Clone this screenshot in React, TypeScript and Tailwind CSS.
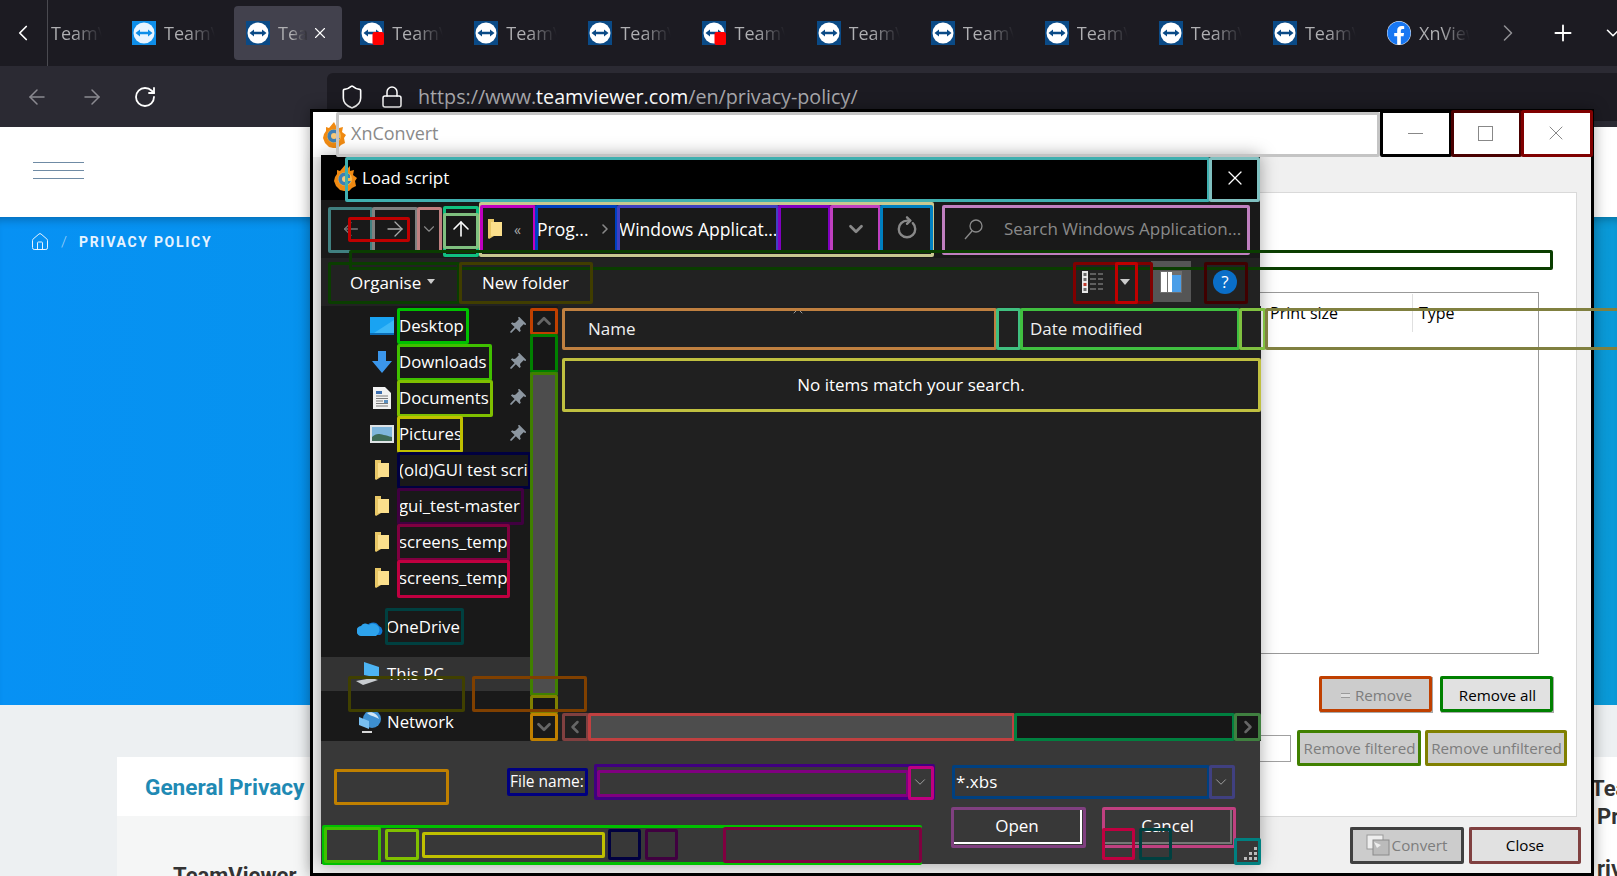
import React from "react";
import {
  ArrowLeft,
  ArrowRight,
  ArrowUp,
  ChevronDown,
  ChevronLeft,
  ChevronRight,
  ChevronUp,
  Home,
  Lock,
  Plus,
  RotateCw,
  Shield,
  X,
} from "lucide-react";
import { FaFacebook } from "react-icons/fa";
import { MdPushPin } from "react-icons/md";

const TvIcon = ({ light, badge }: { light?: boolean; badge?: boolean }) => (
  <svg width="24" height="24" viewBox="0 0 24 24" className="shrink-0">
    <rect width="24" height="24" fill={light ? "#0e8ee9" : "#0a4a86"} />
    <circle cx="12" cy="12" r="10.5" fill={light ? "#e8f4ff" : "#fff"} />
    <path
      d="M3.5 12l4.5-3.5v2.2h8V8.5l4.5 3.5-4.5 3.5v-2.2H8v2.2z"
      fill={light ? "#0e8ee9" : "#0a4a86"}
    />
    {badge && <rect x="12.5" y="11" width="11.5" height="13" rx="2" fill="#f00" />}
  </svg>
);

const XnLogo = () => (
  <svg width="24" height="26" viewBox="0 0 24 26" className="shrink-0">
    <path
      d="M12 0l2 4 3-3 0 5 4-1-1 5 4 3-2 3 1 5-4 2-3 3-5 0-4-1-4-4-2-5 1-4 2-3 0-4 3 1z"
      fill="#f08a12"
    />
    <circle cx="12" cy="14" r="7" fill="#f7b84a" />
    <path d="M17 10a6.5 6.5 0 1 0 1 6h-5v-3h4z" fill="#3f7fb5" />
    <circle cx="12" cy="14" r="3" fill="#f7c878" />
  </svg>
);

const FolderIcon = () => (
  <svg width="14" height="22" viewBox="0 0 14 22" className="shrink-0">
    <path d="M0 1h6v17l-5 3-1-1z" fill="#e8c766" />
    <path d="M3 4h11v14H3z" fill="#fbdf8c" />
  </svg>
);

const DesktopIcon = () => (
  <svg width="24" height="18" viewBox="0 0 24 18">
    <rect y="0" width="24" height="16" fill="#19a3f2" />
    <path d="M0 16h24v2H0z" fill="#0b6cb5" />
    <path d="M4 16L24 3v13z" fill="#3cb7f7" />
  </svg>
);

const DownloadIcon = () => (
  <svg width="20" height="22" viewBox="0 0 20 22">
    <path d="M6 0h8v10h6L10 22 0 10h6z" fill="#3b96ea" />
  </svg>
);

const DocIcon = () => (
  <svg width="18" height="22" viewBox="0 0 18 22">
    <path d="M0 0h12l6 6v16H0z" fill="#f2f2f2" />
    <path d="M3 4h6v3H3z" fill="#3c6fb0" />
    <path d="M3 9h12M3 11.5h12M3 14h7M3 16.5h12M3 19h12" stroke="#7a7a7a" />
    <rect x="11" y="13" width="4" height="3" fill="#5a8fc0" />
  </svg>
);

const PictureIcon = () => (
  <svg width="24" height="18" viewBox="0 0 24 18">
    <rect width="24" height="18" fill="#dfe3e6" />
    <rect x="2" y="2" width="20" height="14" fill="#7fb6dc" />
    <path d="M2 12c5-5 8-3 20 0v4H2z" fill="#3f6b57" />
  </svg>
);

const OneDriveIcon = () => (
  <svg width="26" height="18" viewBox="0 0 26 18">
    <path d="M9 11a7 7 0 0 1 13-3 5 5 0 0 1 1 9H9z" fill="#0f78d4" />
    <path d="M5 18a5 5 0 0 1-1-10 5 5 0 0 1 8-1 6 6 0 0 1 8 10l-1 1z" fill="#2ea3ec" />
  </svg>
);

const PcIcon = () => (
  <svg width="28" height="24" viewBox="0 0 28 24">
    <path d="M8 0l15 5v11l-15-3z" fill="#4db4f3" />
    <path d="M0 19l16-3 6 2-15 5z" fill="#c8ccd0" />
  </svg>
);

const NetworkIcon = () => (
  <svg width="24" height="24" viewBox="0 0 24 24">
    <circle cx="14" cy="9" r="9" fill="#3d8fd0" />
    <path d="M9 3c4-2 10 0 12 6-5-3-9-3-12-6z" fill="#cfe6f7" />
    <path d="M1 7l10 4v8L1 15z" fill="#79c0f2" />
    <path d="M4 21h10v2H4z" fill="#d8d8d8" />
  </svg>
);

const SearchIcon = () => (
  <svg width="20" height="22" viewBox="0 0 20 22" fill="none" stroke="#8a8a8a" strokeWidth="1.3">
    <circle cx="12" cy="8" r="6" />
    <path d="M8 13L1 21" />
  </svg>
);

const ViewsIcon = () => (
  <svg width="22" height="22" viewBox="0 0 22 22">
    <rect width="6" height="22" fill="#e8e8e8" />
    <rect x="1.5" y="2" width="3" height="3" fill="#6a6a6a" />
    <rect x="1.5" y="7" width="3" height="3" fill="#6a6a6a" />
    <rect x="1.5" y="12" width="3" height="3" fill="#c0392b" />
    <rect x="1.5" y="17" width="3" height="3" fill="#6a6a6a" />
    <path d="M8 3h6M16 3h5M8 8h6M16 8h5M8 13h6M16 13h5M8 18h6M16 18h5" stroke="#9a9a9a" />
  </svg>
);

const PaneIcon = () => (
  <svg width="22" height="22" viewBox="0 0 22 22">
    <rect width="22" height="22" fill="#6f6f6f" />
    <rect x="1" y="1" width="6" height="20" fill="#fff" />
    <rect x="8" y="1" width="4" height="20" fill="#fff" />
    <rect x="12" y="4" width="9" height="17" fill="#4a9ee8" />
  </svg>
);

const ConvertIcon = () => (
  <svg width="24" height="22" viewBox="0 0 24 22">
    <rect x="1" y="1" width="16" height="14" fill="#eee" stroke="#999" />
    <rect x="7" y="6" width="16" height="15" fill="#bbb" stroke="#8a8a8a" />
    <path d="M8 8l7 3-4 3z" fill="#eee" />
  </svg>
);

const TABS = [
  { light: true },
  { active: true },
  { badge: true },
  {},
  {},
  { badge: true },
  {},
  {},
  {},
  {},
  {},
];

const BrowserTabs = () => (
  <div className="flex items-center h-[66px] bg-[#1c1b22] shrink-0 overflow-hidden">
    <div className="flex items-center justify-center w-[48px] h-full border-r border-[#4a4a50] pr-[1px] shrink-0">
      <ChevronLeft className="w-[26px] h-[26px] text-white" strokeWidth={1.6} />
    </div>
    <div className="w-[72px] pl-[3px] shrink-0">
      <TabLabel />
    </div>
    {TABS.map((t, i) => (
      <div key={i} className="w-[114.1px] shrink-0">
        <div
          className={`flex items-center gap-[8px] w-[108px] h-[54px] pl-[12px] rounded-[4px] ${
            t.active ? "bg-[#42414d]" : ""
          }`}
        >
          <TvIcon light={t.light} badge={t.badge} />
          {t.active ? (
            <div className="flex items-center">
              <TabLabel short />
              <X className="w-[18px] h-[18px] text-white ml-[2px]" strokeWidth={1.5} />
            </div>
          ) : (
            <TabLabel />
          )}
        </div>
      </div>
    ))}
    <div className="flex items-center gap-[8px] w-[108px] pl-[12px] shrink-0">
      <div className="relative w-[24px] h-[24px] rounded-full bg-white shrink-0">
        <FaFacebook className="w-[24px] h-[24px] text-[#1877f2]" />
      </div>
      <TabLabel text="XnView" />
    </div>
    <ChevronRight className="w-[28px] h-[28px] text-[#8f8f93] ml-[11px] shrink-0" strokeWidth={1.3} />
    <Plus className="w-[26px] h-[26px] text-white ml-[28px] shrink-0" strokeWidth={1.7} />
    <ChevronDown className="w-[22px] h-[22px] text-white ml-[26px] shrink-0" strokeWidth={1.7} />
  </div>
);

const TabLabel = ({ text = "TeamViewer", short }: { text?: string; short?: boolean }) => (
  <div
    className={`overflow-hidden whitespace-nowrap text-[18px] leading-[24px] font-['Open_Sans',sans-serif] bg-gradient-to-r from-[#b0b0b3] from-45% to-[#1c1b22] bg-clip-text text-transparent ${
      short ? "w-[31px]" : "w-[51px]"
    }`}
  >
    {text}
  </div>
);

const BrowserToolbar = () => (
  <div className="flex items-center h-[61px] bg-[#2b2a33] shrink-0 pl-[25px]">
    <ArrowLeft className="w-[24px] h-[24px] text-[#8b8a91]" strokeWidth={1.5} />
    <ArrowRight className="w-[24px] h-[24px] text-[#8b8a91] ml-[31px]" strokeWidth={1.5} />
    <RotateCw className="w-[24px] h-[24px] text-white ml-[29px]" strokeWidth={1.8} />
    <div className="flex items-center flex-1 h-[48px] ml-[170px] bg-[#1c1b22] rounded-tl-[6px] pl-[12px] overflow-hidden">
      <Shield className="w-[26px] h-[28px] text-white" strokeWidth={1.5} />
      <Lock className="w-[24px] h-[28px] text-white ml-[15px]" strokeWidth={1.5} />
      <div className="ml-[14px] text-[19.7px] whitespace-nowrap text-[#a9a9ad] font-['Open_Sans',sans-serif]">
        https://www.<span className="text-white">teamviewer.com</span>/en/privacy-policy/
      </div>
    </div>
  </div>
);

const PrivacyPage = () => (
  <div className="flex flex-col flex-1 min-h-0 font-['Roboto',sans-serif]">
    <div className="h-[90px] bg-white flex flex-col gap-[7px] pl-[33px] pt-[35px] shrink-0">
      <div className="w-[51px] h-[1px] bg-[#6f8ba5]" />
      <div className="w-[51px] h-[1px] bg-[#6f8ba5]" />
      <div className="w-[51px] h-[1px] bg-[#6f8ba5]" />
    </div>
    <div className="h-[488px] shrink-0 bg-gradient-to-r from-[#0791f4] to-[#0a9ad8] shadow-[inset_0_9px_8px_-6px_rgba(0,0,0,0.25)] pt-[14px] pl-[30px]">
      <div className="flex items-center text-[#e6f3ff]">
        <Home className="w-[20px] h-[20px]" strokeWidth={1.2} />
        <span className="ml-[11px] text-[15px] font-light text-[#9fd2fa]">/</span>
        <span className="ml-[12px] text-[14px] font-bold tracking-[1.7px]">PRIVACY POLICY</span>
      </div>
    </div>
    <div className="flex flex-1 bg-[#edf0f2] pt-[52px] pl-[117px]">
      <div className="flex flex-col flex-1">
        <div className="h-[59px] bg-white pl-[28px] pt-[14px] text-[22.6px] font-bold text-[#1f8ab4] whitespace-nowrap">
          General Privacy
        </div>
        <div className="flex-1 bg-[#f5f6f6] pl-[56px] pt-[43px] text-[22px] font-bold text-[#333] whitespace-nowrap">
          TeamViewer
        </div>
      </div>
      <div className="w-[26px] bg-white overflow-hidden whitespace-nowrap text-[22px] font-bold text-[#333] leading-[28px] pt-[18px]">
        <div>Team</div>
        <div className="pl-[6px]">Pr</div>
        <div className="pt-[24px] pl-[6px]">riv</div>
      </div>
    </div>
  </div>
);

const XnButton = ({
  disabled,
  className,
  children,
}: {
  disabled?: boolean;
  className: string;
  children: React.ReactNode;
}) => (
  <div
    className={`flex items-center justify-center text-[15.2px] border border-[#a8a8a8] whitespace-nowrap ${
      disabled ? "bg-[#cccccc] text-[#7d7d7d]" : "bg-[#e1e1e1] text-black"
    } ${className}`}
  >
    {children}
  </div>
);

const XnConvertWindow = () => (
  <div className="absolute left-[310px] top-[109px] w-[1284px] h-[767px] border-[3px] border-black bg-[#f0f0f0] flex flex-col shadow-[0_0_14px_rgba(0,0,0,0.35)] font-['Open_Sans',sans-serif]">
    <div className="flex items-center h-[45px] bg-white shrink-0 pl-[9px]">
      <XnLogo />
      <span className="ml-[5px] text-[18px] text-[#8a8a8a] -mt-[2px]">XnConvert</span>
      <div className="ml-auto flex h-full -mt-[3px]">
        <div className="w-[70px] flex items-center justify-center">
          <div className="w-[15px] h-[1px] bg-[#888]" />
        </div>
        <div className="w-[70px] flex items-center justify-center">
          <div className="w-[15px] h-[15px] border border-[#888]" />
        </div>
        <div className="w-[71px] flex items-center justify-center">
          <X className="w-[24px] h-[24px] text-[#888]" strokeWidth={1} />
        </div>
      </div>
    </div>
    <div className="flex-1 flex flex-col items-end">
      <div className="mt-[35px] mr-[14px] w-[940px] h-[625px] bg-white border border-[#d9d9d9] flex flex-col items-end">
        <div className="mt-[99px] mr-[37px] w-[400px] h-[362px] border border-[#999]">
          <div className="flex items-center h-[40px] pl-[130px] text-[16px] text-black whitespace-nowrap">
            <div className="w-[143px] h-[38px] flex items-center border-r border-[#e0e0e0]">Print size</div>
            <div className="pl-[6px]">Type</div>
          </div>
        </div>
        <div className="flex gap-[8px] mt-[23px] mr-[22px]">
          <XnButton disabled className="w-[113px] h-[36px]">
            <span className="w-[9px] h-[5px] border-y border-[#9a9a9a] bg-[#ddd] mr-[5px]" />
            Remove
          </XnButton>
          <XnButton className="w-[113px] h-[36px]">Remove all</XnButton>
        </div>
        <div className="flex gap-[5px] mt-[18px] mr-[9px] items-center">
          <div className="w-[40px] h-[27px] border border-[#a0a0a0] bg-white mr-[2px]" />
          <XnButton disabled className="w-[123px] h-[35px]">
            Remove filtered
          </XnButton>
          <XnButton disabled className="w-[141px] h-[35px]">
            Remove unfiltered
          </XnButton>
        </div>
      </div>
      <div className="flex gap-[6px] mt-[10px] mr-[10px]">
        <XnButton disabled className="w-[113px] h-[36px]">
          <ConvertIcon />
          <span className="ml-[2px]">Convert</span>
        </XnButton>
        <XnButton className="w-[112px] h-[36px]">Close</XnButton>
      </div>
    </div>
  </div>
);

const NAV_ITEMS = [
  { name: "Desktop", icon: <DesktopIcon />, pin: true },
  { name: "Downloads", icon: <DownloadIcon />, pin: true },
  { name: "Documents", icon: <DocIcon />, pin: true },
  { name: "Pictures", icon: <PictureIcon />, pin: true },
  { name: "(old)GUI test scripts", icon: <FolderIcon /> },
  { name: "gui_test-master", icon: <FolderIcon /> },
  { name: "screens_temp", icon: <FolderIcon /> },
  { name: "screens_temp", icon: <FolderIcon /> },
];

const NavSidebar = () => (
  <div className="w-[209px] shrink-0 bg-[#191919] flex flex-col pt-[2px] text-[16.8px] text-white overflow-hidden">
    {NAV_ITEMS.map((item, i) => (
      <div key={i} className="flex items-center h-[36px] shrink-0 pl-[48px]">
        <div className="w-[26px] flex justify-center shrink-0">{item.icon}</div>
        <div className="ml-[4px] whitespace-nowrap overflow-hidden w-[110px] flex-1">{item.name}</div>
        {item.pin && <MdPushPin className="w-[21px] h-[21px] rotate-45 text-[#8c96a0] mx-[3px] shrink-0" />}
      </div>
    ))}
    <div className="flex items-center h-[37px] mt-[12px] pl-[36px] shrink-0">
      <OneDriveIcon />
      <span className="ml-[3px]">OneDrive</span>
    </div>
    <div className="flex items-center h-[34px] mt-[12px] pl-[35px] bg-[#333] shrink-0">
      <PcIcon />
      <span className="ml-[3px]">This PC</span>
    </div>
    <div className="flex items-center h-[36px] mt-[13px] pl-[37px] shrink-0">
      <NetworkIcon />
      <span className="ml-[5px]">Network</span>
    </div>
  </div>
);

const SidebarScroll = () => (
  <div className="w-[28px] shrink-0 flex flex-col pt-[2px] bg-[#191919]">
    <div className="h-[26px] flex items-center justify-center">
      <ChevronUp className="w-[22px] h-[22px] text-[#666]" strokeWidth={3} />
    </div>
    <div className="h-[38px] bg-[#171717]" />
    <div className="h-[323px] bg-[#4d4d4d]" />
    <div className="h-[18px] bg-[#171717]" />
    <div className="h-[28px] flex items-center justify-center">
      <ChevronDown className="w-[22px] h-[22px] text-[#666]" strokeWidth={3} />
    </div>
  </div>
);

const FileList = () => (
  <div className="flex-1 bg-[#202020] flex flex-col pt-[2px] pl-[4px] text-[17px] text-[#f0f0f0] relative">
    <div className="flex h-[42px] items-center">
      <div className="w-[434px] pl-[26px]">Name</div>
      <div className="w-[24px]" />
      <div className="pl-[10px] whitespace-nowrap">Date modified</div>
    </div>
    <ChevronUp className="absolute left-[232px] top-[-3px] w-[16px] h-[16px] text-[#9a9a9a]" strokeWidth={1.5} />
    <div className="h-[54px] mt-[8px] w-[698px] flex items-center justify-center text-white">
      No items match your search.
    </div>
    <div className="flex-1" />
    <div className="flex h-[28px]">
      <div className="w-[26px] flex items-center justify-center bg-[#202020]">
        <ChevronLeft className="w-[20px] h-[20px] text-[#666]" strokeWidth={3} />
      </div>
      <div className="w-[426px] bg-[#4d4d4d]" />
      <div className="w-[220px] bg-[#171717]" />
      <div className="w-[27px] flex items-center justify-center bg-[#171717]">
        <ChevronRight className="w-[20px] h-[20px] text-[#666]" strokeWidth={3} />
      </div>
    </div>
  </div>
);

const LoadScriptDialog = () => (
  <div className="absolute left-[321px] top-[155px] w-[939px] h-[709px] flex flex-col bg-[#383838] shadow-[0_0_16px_rgba(0,0,0,0.35)] font-['Open_Sans',sans-serif] text-white">
    <div className="flex items-center h-[45px] bg-black shrink-0 pl-[12px]">
      <XnLogo />
      <span className="ml-[5px] text-[17px]">Load script</span>
      <div className="ml-auto w-[51px] flex items-center justify-center">
        <X className="w-[24px] h-[24px] text-white" strokeWidth={1.2} />
      </div>
    </div>

    <div className="flex items-center h-[58px] bg-[#191919] shrink-0 pl-[7px] text-[17.5px]">
      <div className="w-[44px] flex justify-center pl-[2px]">
        <ArrowLeft className="w-[22px] h-[22px] text-[#777]" strokeWidth={1.4} />
      </div>
      <div className="w-[45px] flex justify-center">
        <ArrowRight className="w-[24px] h-[24px] text-[#aaa]" strokeWidth={1.3} />
      </div>
      <div className="w-[24px] flex justify-center">
        <ChevronDown className="w-[18px] h-[18px] text-[#888]" strokeWidth={1.5} />
      </div>
      <div className="w-[36px] ml-[2px] flex justify-center">
        <ArrowUp className="w-[24px] h-[24px] text-white" strokeWidth={1.6} />
      </div>
      <div className="w-[55px] ml-[1px] flex items-center pl-[8px]">
        <FolderIcon />
        <span className="ml-[12px] text-[14px] text-[#aaa]">«</span>
      </div>
      <div className="w-[82px] flex items-center pl-[2px]">
        Prog...
        <ChevronRight className="w-[16px] h-[16px] text-[#888] ml-[8px]" strokeWidth={2.4} />
      </div>
      <div className="w-[161px] pl-[2px] whitespace-nowrap overflow-hidden">Windows Applicat...</div>
      <div className="w-[53px]" />
      <div className="w-[50px] flex justify-center">
        <ChevronDown className="w-[22px] h-[22px] text-[#888]" strokeWidth={3} />
      </div>
      <div className="w-[51px] flex justify-center">
        <RotateCw className="w-[22px] h-[22px] text-[#888] -rotate-45" strokeWidth={2.6} />
      </div>
      <div className="w-[308px] ml-[10px] flex items-center pl-[22px] text-[17px] text-[#8a8a8a] whitespace-nowrap overflow-hidden">
        <SearchIcon />
        <span className="ml-[20px]">Search Windows Application...</span>
      </div>
    </div>

    <div className="flex items-center h-[48px] bg-[#222] shrink-0 pl-[7px] pt-[2px] text-[17px]">
      <div className="w-[131px] pl-[22px] flex items-center">
        Organise
        <span className="ml-[6px] w-0 h-0 border-x-[4px] border-x-transparent border-t-[5px] border-t-[#ccc] -mt-[3px]" />
      </div>
      <div className="w-[133px] pl-[23px]">New folder</div>
      <div className="ml-auto flex items-center h-[41px] -mt-[3px]">
        <div className="w-[42px] flex justify-center">
          <ViewsIcon />
        </div>
        <div className="w-[37px] flex justify-center pr-[16px]">
          <span className="w-0 h-0 border-x-[5px] border-x-transparent border-t-[6px] border-t-[#ccc]" />
        </div>
        <div className="w-[40px] h-full bg-[#555] flex items-center justify-center">
          <PaneIcon />
        </div>
        <div className="w-[44px] ml-[12px] flex justify-center">
          <div className="w-[24px] h-[24px] rounded-full bg-[#0a6ec8] text-white text-[17px] leading-[24px] text-center">
            ?
          </div>
        </div>
        <div className="w-[13px]" />
      </div>
    </div>

    <div className="flex h-[435px] shrink-0">
      <NavSidebar />
      <SidebarScroll />
      <FileList />
    </div>

    <div className="flex-1 pt-[23px] pl-[186px] text-[17px]">
      <div className="flex h-[36px] items-center">
        <div className="w-[81px] text-[15.5px] pl-[3px] whitespace-nowrap">File name:</div>
        <div className="w-[340px] ml-[6px] flex justify-end pr-[5px]">
          <ChevronDown className="w-[18px] h-[18px] text-[#aaa]" strokeWidth={1.2} />
        </div>
        <div className="w-[282px] ml-[18px] flex items-center justify-between pl-[4px] pr-[4px]">
          <span>*.xbs</span>
          <ChevronDown className="w-[18px] h-[18px] text-[#aaa]" strokeWidth={1.2} />
        </div>
      </div>
      <div className="flex h-[40px] mt-[7px] ml-[444px]">
        <div className="w-[134px] p-[3px]">
          <div className="h-full border-b-2 border-r-2 border-white flex items-center justify-center">Open</div>
        </div>
        <div className="w-[133px] ml-[17px] p-[3px]">
          <div className="h-full border-b-2 border-r-2 border-[#777] flex items-center justify-center">Cancel</div>
        </div>
      </div>
    </div>

    <div className="absolute right-[3px] bottom-[4px] grid grid-cols-3 gap-[2px]">
      <span />
      <span />
      <span className="w-[3px] h-[3px] bg-[#bbb]" />
      <span />
      <span className="w-[3px] h-[3px] bg-[#bbb]" />
      <span className="w-[3px] h-[3px] bg-[#bbb]" />
      <span className="w-[3px] h-[3px] bg-[#bbb]" />
      <span className="w-[3px] h-[3px] bg-[#bbb]" />
      <span className="w-[3px] h-[3px] bg-[#bbb]" />
    </div>
  </div>
);

// the coloured element boxes drawn on top of the screenshot
const BOXES = [
  "left-[336px] top-[112px] w-[1044px] h-[45px] border-[#c4c4c4]",
  "left-[1380px] top-[110px] w-[72px] h-[47px] border-black",
  "left-[1451px] top-[110px] w-[71px] h-[47px] border-[#4a0000]",
  "left-[1521px] top-[110px] w-[72px] h-[47px] border-[#800000]",
  "left-[345px] top-[157px] w-[865px] h-[45px] border-[#40b0b0]",
  "left-[1209px] top-[157px] w-[51px] h-[45px] border-[#80c0c0]",
  "left-[328px] top-[207px] w-[45px] h-[46px] border-[#408080]",
  "left-[372px] top-[207px] w-[46px] h-[46px] border-[#808080]",
  "left-[417px] top-[207px] w-[25px] h-[46px] border-[#c08080]",
  "left-[348px] top-[217px] w-[62px] h-[25px] border-[#c00000]",
  "left-[443px] top-[206px] w-[36px] h-[51px] border-[#10c080]",
  "left-[443px] top-[213px] w-[36px] h-[36px] border-[#80c080]",
  "left-[479px] top-[202px] w-[455px] h-[55px] border-[#c8c890]",
  "left-[480px] top-[205px] w-[56px] h-[48px] border-[#c000c0]",
  "left-[535px] top-[205px] w-[83px] h-[48px] border-[#0040c0]",
  "left-[617px] top-[205px] w-[162px] h-[48px] border-[#4040c0]",
  "left-[778px] top-[205px] w-[53px] h-[48px] border-[#8000c0]",
  "left-[830px] top-[205px] w-[51px] h-[48px] border-[#c040c0]",
  "left-[880px] top-[205px] w-[53px] h-[48px] border-[#0080c0]",
  "left-[942px] top-[205px] w-[308px] h-[50px] border-[#c080c0]",
  "left-[349px] top-[250px] w-[1204px] h-[20px] border-[#0a3d00]",
  "left-[328px] top-[262px] w-[132px] h-[42px] border-[#0a3d00]",
  "left-[459px] top-[262px] w-[134px] h-[42px] border-[#403d00]",
  "left-[1073px] top-[262px] w-[80px] h-[42px] border-[#800000]",
  "left-[1115px] top-[262px] w-[23px] h-[42px] border-[#c00000]",
  "left-[1204px] top-[262px] w-[44px] h-[42px] border-[#400000]",
  "left-[397px] top-[308px] w-[72px] h-[36px] border-[#00c000]",
  "left-[397px] top-[344px] w-[95px] h-[37px] border-[#40c000]",
  "left-[397px] top-[380px] w-[96px] h-[37px] border-[#80c000]",
  "left-[397px] top-[416px] w-[66px] h-[37px] border-[#c0c000]",
  "left-[397px] top-[452px] w-[134px] h-[37px] border-[#000040]",
  "left-[397px] top-[488px] w-[127px] h-[37px] border-[#400040]",
  "left-[397px] top-[524px] w-[113px] h-[37px] border-[#800040]",
  "left-[397px] top-[560px] w-[113px] h-[38px] border-[#c00040]",
  "left-[530px] top-[308px] w-[28px] h-[27px] border-[#c04000]",
  "left-[530px] top-[334px] w-[28px] h-[39px] border-[#008000]",
  "left-[530px] top-[372px] w-[28px] h-[324px] border-[#408000]",
  "left-[530px] top-[695px] w-[28px] h-[19px] border-[#808000]",
  "left-[530px] top-[713px] w-[28px] h-[28px] border-[#c08000]",
  "left-[385px] top-[608px] w-[79px] h-[37px] border-[#004040]",
  "left-[348px] top-[676px] w-[117px] h-[36px] border-[#404000]",
  "left-[472px] top-[676px] w-[115px] h-[36px] border-[#804000]",
  "left-[562px] top-[308px] w-[435px] h-[42px] border-[#c08040]",
  "left-[996px] top-[308px] w-[25px] h-[42px] border-[#40c080]",
  "left-[1020px] top-[308px] w-[220px] h-[42px] border-[#40c040]",
  "left-[1239px] top-[308px] w-[27px] h-[42px] border-[#80c040]",
  "left-[1265px] top-[308px] w-[400px] h-[42px] border-[#808040]",
  "left-[562px] top-[358px] w-[699px] h-[54px] border-[#c0c040]",
  "left-[562px] top-[713px] w-[27px] h-[28px] border-[#804040]",
  "left-[588px] top-[713px] w-[427px] h-[28px] border-[#c04040]",
  "left-[1014px] top-[713px] w-[221px] h-[28px] border-[#008040]",
  "left-[1234px] top-[713px] w-[27px] h-[28px] border-[#408040]",
  "left-[334px] top-[769px] w-[115px] h-[36px] border-[#c08000]",
  "left-[507px] top-[768px] w-[81px] h-[28px] border-[#000080]",
  "left-[594px] top-[764px] w-[341px] h-[36px] border-[#400080]",
  "left-[597px] top-[770px] w-[312px] h-[27px] border-[#800080]",
  "left-[908px] top-[766px] w-[26px] h-[34px] border-[#c00080]",
  "left-[952px] top-[765px] w-[258px] h-[34px] border-[#004080]",
  "left-[1209px] top-[765px] w-[26px] h-[34px] border-[#404080]",
  "left-[951px] top-[807px] w-[135px] h-[41px] border-[#804080]",
  "left-[1102px] top-[807px] w-[134px] h-[41px] border-[#c04080]",
  "left-[1102px] top-[828px] w-[33px] h-[32px] border-[#c00040]",
  "left-[1139px] top-[828px] w-[33px] h-[32px] border-[#004040]",
  "left-[1234px] top-[838px] w-[27px] h-[27px] border-[#008080]",
  "left-[322px] top-[825px] w-[600px] h-[40px] border-[#00c000]",
  "left-[324px] top-[827px] w-[57px] h-[36px] border-[#40c000]",
  "left-[385px] top-[829px] w-[34px] h-[31px] border-[#80c000]",
  "left-[422px] top-[832px] w-[183px] h-[26px] border-[#c0c000]",
  "left-[608px] top-[829px] w-[33px] h-[31px] border-[#000040]",
  "left-[645px] top-[829px] w-[33px] h-[31px] border-[#400040]",
  "left-[723px] top-[827px] w-[199px] h-[36px] border-[#800040]",
  "left-[1319px] top-[676px] w-[113px] h-[36px] border-[#c04000]",
  "left-[1440px] top-[676px] w-[113px] h-[36px] border-[#008000]",
  "left-[1297px] top-[730px] w-[124px] h-[36px] border-[#408000]",
  "left-[1425px] top-[730px] w-[142px] h-[36px] border-[#808000]",
  "left-[1350px] top-[827px] w-[114px] h-[37px] border-[#404040]",
  "left-[1469px] top-[827px] w-[112px] h-[37px] border-[#804040]",
];

export default function App() {
  return (
    <div className="relative w-[1617px] h-[876px] overflow-hidden bg-white flex flex-col">
      <BrowserTabs />
      <BrowserToolbar />
      <PrivacyPage />
      <XnConvertWindow />
      <LoadScriptDialog />
      {BOXES.map((box, i) => (
        <div key={i} className={`absolute border-[3px] rounded-[2px] pointer-events-none ${box}`} />
      ))}
    </div>
  );
}
